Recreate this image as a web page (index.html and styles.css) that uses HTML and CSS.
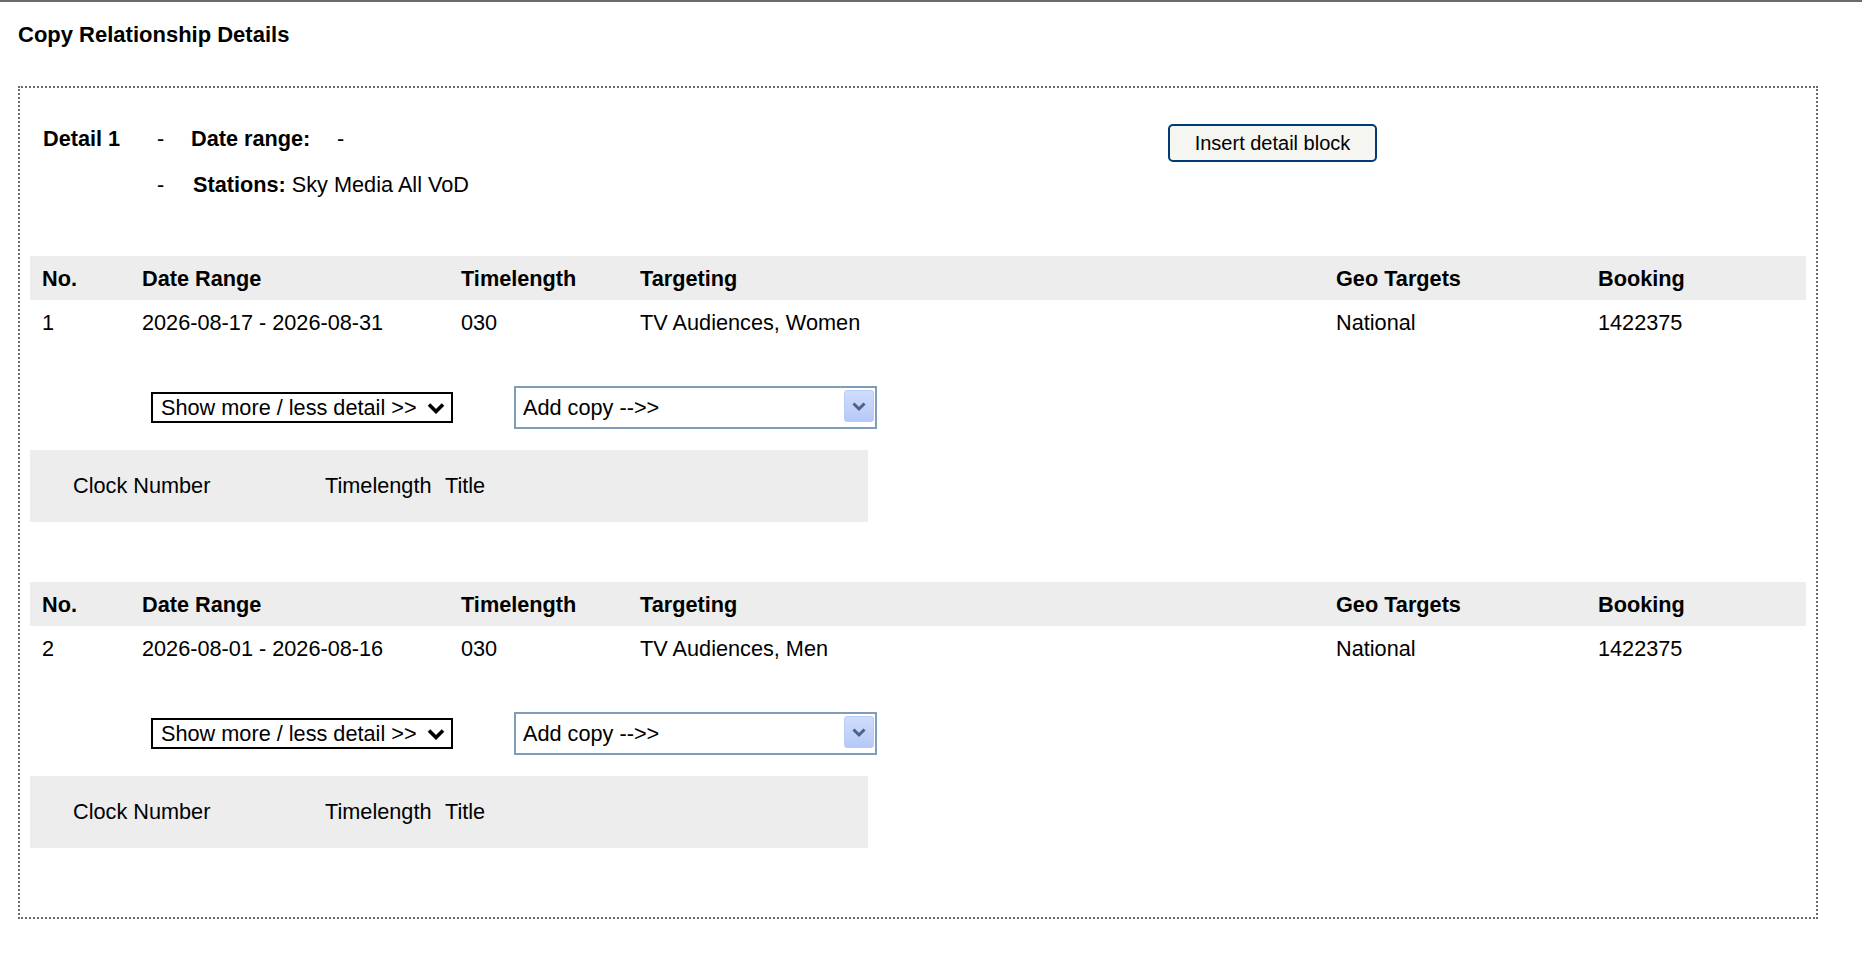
FILE: index.html
```html
<!DOCTYPE html>
<html lang="en">
<head>
<meta charset="utf-8">
<title>Copy Relationship Details</title>
<link rel="stylesheet" href="styles.css">
</head>
<body>
<div class="topline"></div>
<div class="page">
  <h1 class="title">Copy Relationship Details</h1>
  <div class="box">
    <div class="detail-head">
      <div class="detail-grid">
        <span class="strong">Detail 1</span>
        <span>-</span>
        <span class="strong">Date range:</span>
        <span>-</span>
        <span></span>
        <span>-</span>
        <span class="span2 stations"><b>Stations:</b> Sky Media All VoD</span>
      </div>
      <button class="insert-btn" type="button">Insert detail block</button>
    </div>

    <section class="line-block">
      <table class="lines">
        <colgroup>
          <col class="c-no"><col class="c-date"><col class="c-len"><col class="c-tgt"><col class="c-geo"><col class="c-book">
        </colgroup>
        <thead>
          <tr><th>No.</th><th>Date Range</th><th>Timelength</th><th>Targeting</th><th>Geo Targets</th><th>Booking</th></tr>
        </thead>
        <tbody>
          <tr><td>1</td><td>2026-08-17 - 2026-08-31</td><td>030</td><td>TV Audiences, Women</td><td>National</td><td>1422375</td></tr>
        </tbody>
      </table>
      <div class="controls">
        <span class="select-wrap detail-select">
          <select class="sel-detail"><option>Show more / less detail &gt;&gt;</option></select>
          <svg class="chev" width="18" height="12" viewBox="0 0 18 12"><path d="M2 2.5 L9 9.5 L16 2.5" fill="none" stroke="#000" stroke-width="3.6"/></svg>
        </span>
        <span class="select-wrap copy-select">
          <select class="sel-copy"><option>Add copy --&gt;&gt;</option></select>
          <span class="drop-btn"><svg width="16" height="11" viewBox="0 0 16 11"><path d="M2.5 2.5 L8 8 L13.5 2.5" fill="none" stroke="#4d6185" stroke-width="3"/></svg></span>
        </span>
      </div>
      <div class="clock">
        <span>Clock Number</span><span>Timelength</span><span>Title</span>
      </div>
    </section>

    <section class="line-block second">
      <table class="lines">
        <colgroup>
          <col class="c-no"><col class="c-date"><col class="c-len"><col class="c-tgt"><col class="c-geo"><col class="c-book">
        </colgroup>
        <thead>
          <tr><th>No.</th><th>Date Range</th><th>Timelength</th><th>Targeting</th><th>Geo Targets</th><th>Booking</th></tr>
        </thead>
        <tbody>
          <tr><td>2</td><td>2026-08-01 - 2026-08-16</td><td>030</td><td>TV Audiences, Men</td><td>National</td><td>1422375</td></tr>
        </tbody>
      </table>
      <div class="controls">
        <span class="select-wrap detail-select">
          <select class="sel-detail"><option>Show more / less detail &gt;&gt;</option></select>
          <svg class="chev" width="18" height="12" viewBox="0 0 18 12"><path d="M2 2.5 L9 9.5 L16 2.5" fill="none" stroke="#000" stroke-width="3.6"/></svg>
        </span>
        <span class="select-wrap copy-select">
          <select class="sel-copy"><option>Add copy --&gt;&gt;</option></select>
          <span class="drop-btn"><svg width="16" height="11" viewBox="0 0 16 11"><path d="M2.5 2.5 L8 8 L13.5 2.5" fill="none" stroke="#4d6185" stroke-width="3"/></svg></span>
        </span>
      </div>
      <div class="clock">
        <span>Clock Number</span><span>Timelength</span><span>Title</span>
      </div>
    </section>
  </div>
</div>
</body>
</html>
```

FILE: styles.css
```css
html, body {
  margin: 0;
  padding: 0;
  background: #ffffff;
}

body {
  font-family: "Liberation Sans", Arial, sans-serif;
  font-size: 21.7px;
  color: #000;
}

.topline {
  height: 2px;
  background: #6b6b6b;
}

.page {
  padding-left: 18px;
}

.title {
  margin: 20px 0 0 0;
  font-size: 22px;
  line-height: 26px;
  font-weight: bold;
}

.box {
  margin-top: 38px;
  width: 1800px;
  box-sizing: border-box;
  border: 2px dotted #6b6b6b;
  padding: 0 10px 69px 10px;
}

/* detail header */
.detail-head {
  display: flex;
  align-items: flex-start;
  padding: 28px 0 0 13px;
}

.detail-grid {
  flex: 0 0 1125px;
  display: grid;
  grid-template-columns: 114px 34px 146px auto;
  grid-auto-rows: 46px;
  line-height: 46px;
}

.strong,
.stations b {
  font-weight: bold;
}

.span2 {
  grid-column: 3 / span 2;
}

.stations {
  padding-left: 2px;
}

.insert-btn {
  margin-top: 8px;
  width: 209px;
  height: 38px;
  border: 2px solid #003c74;
  border-radius: 5px;
  background: #f5f5f1;
  font-family: "Liberation Sans", Arial, sans-serif;
  font-size: 20px;
  color: #000;
  padding: 0;
}

/* line blocks */
.line-block {
  margin-top: 48px;
}

.line-block.second {
  margin-top: 60px;
}

.lines {
  width: 1776px;
  border-collapse: collapse;
  table-layout: fixed;
}

.c-no { width: 100px; }
.c-date { width: 319px; }
.c-len { width: 179px; }
.c-tgt { width: 696px; }
.c-geo { width: 262px; }
.c-book { width: 220px; }

.lines th,
.lines td {
  padding: 1px 0 0 12px;
  height: 44px;
  box-sizing: border-box;
  line-height: 43px;
  text-align: left;
  white-space: nowrap;
  vertical-align: middle;
}

.lines th {
  background: #ededed;
  font-weight: bold;
}

.lines td {
  font-weight: normal;
}

.controls {
  display: flex;
  align-items: center;
  height: 43px;
  margin-top: 42px;
  padding-left: 121px;
}

.select-wrap {
  position: relative;
  display: inline-block;
}

.copy-select {
  margin-left: 61px;
}

.sel-detail,
.sel-copy {
  appearance: none;
  -webkit-appearance: none;
  font-family: "Liberation Sans", Arial, sans-serif;
  font-size: 21.7px;
  color: #000;
  background: #fff;
  border-radius: 0;
  outline: none;
  margin: 0;
  display: block;
}

.sel-detail {
  width: 302px;
  height: 31px;
  border: 2px solid #000;
  padding: 0 0 0 8px;
}

.sel-copy {
  width: 363px;
  height: 43px;
  border: 2px solid #7f9db9;
  padding: 0 0 0 7px;
}

.chev {
  position: absolute;
  right: 8px;
  top: 10px;
  pointer-events: none;
}

.drop-btn {
  position: absolute;
  right: 3px;
  top: 4px;
  width: 30px;
  height: 32px;
  box-sizing: border-box;
  border: 1px solid #b8ccf4;
  border-radius: 3px;
  background: linear-gradient(#cfdcfd, #b6c9f6);
  display: flex;
  align-items: center;
  justify-content: center;
  pointer-events: none;
}

.clock {
  margin-top: 21px;
  width: 838px;
  height: 72px;
  box-sizing: border-box;
  background: #ededed;
  padding-left: 43px;
  display: grid;
  grid-template-columns: 252px 120px auto;
  line-height: 72px;
}
```
